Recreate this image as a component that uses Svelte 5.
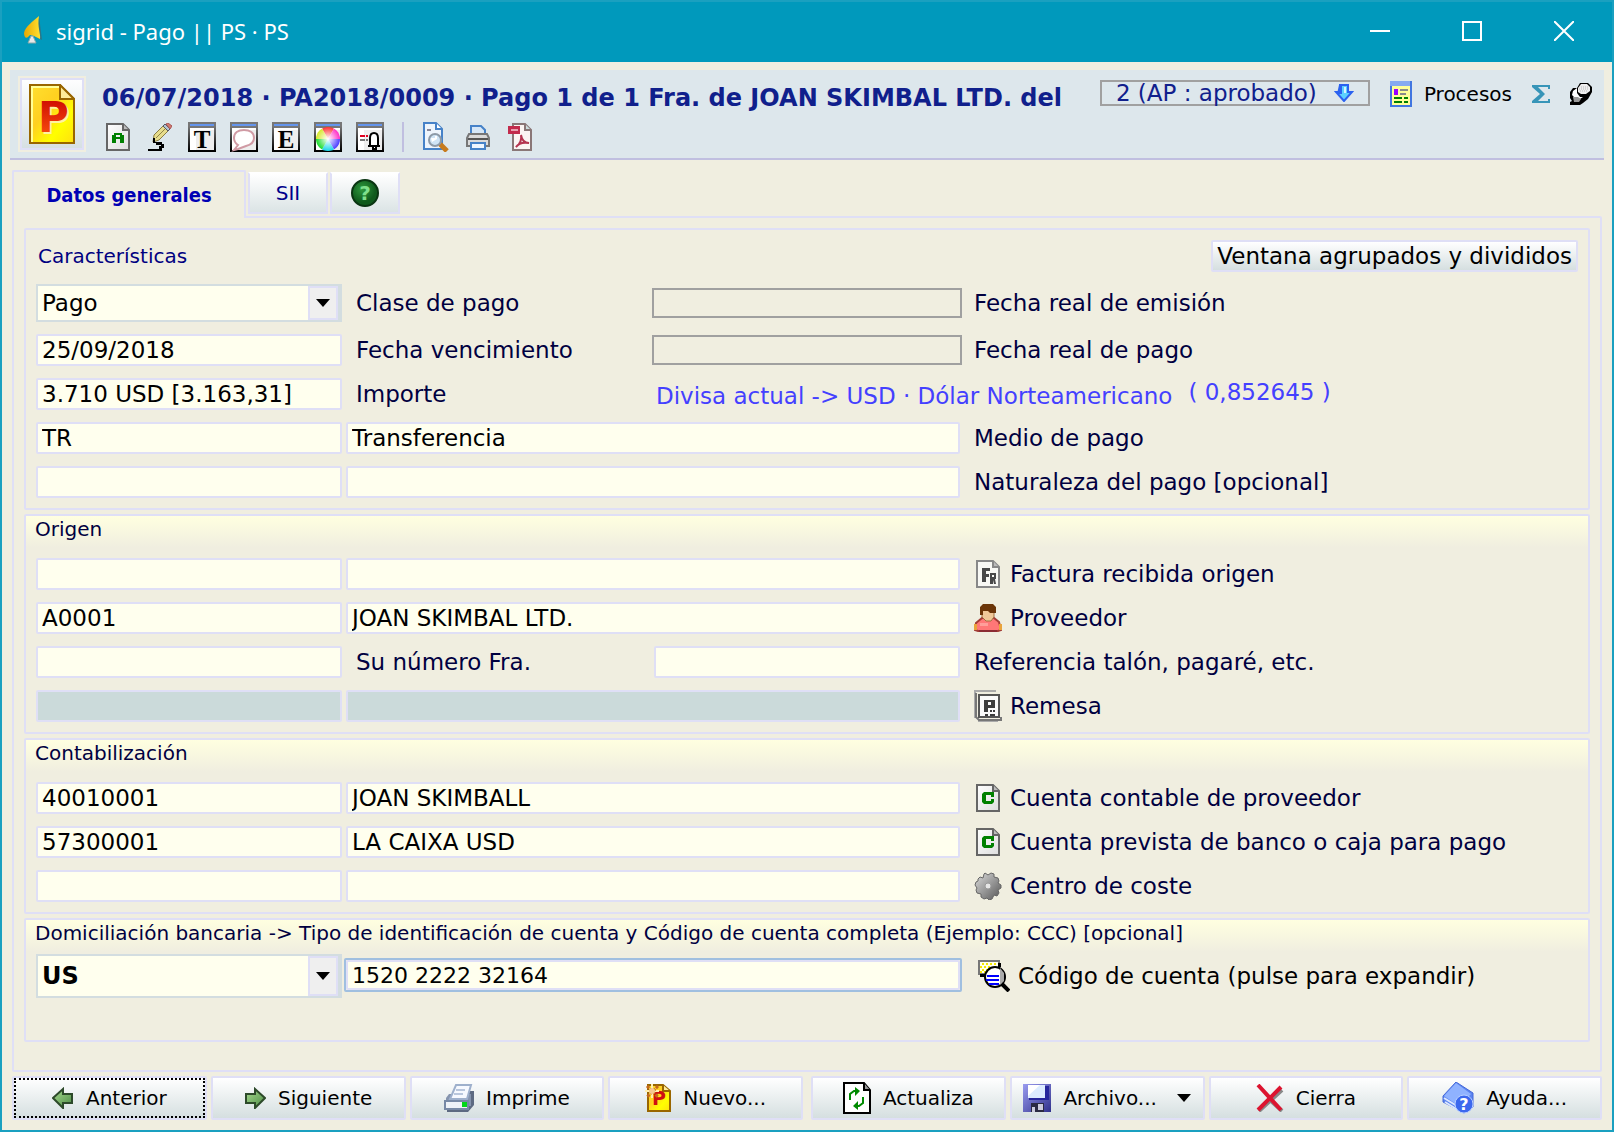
<script lang="ts">
  type Row = {
    id: string;
    code: string;
    name: string;
    label: string;
    icon?: string;
    readonly?: boolean;
  };

  const tools = ["doc-a", "pencil", "text", "bubble", "entry", "colors", "alarm"];
  const output = ["preview", "printer", "pdf"];

  const accounts: Row[] = [
    { id: "supplier-account", code: "40010001", name: "JOAN SKIMBALL", label: "Cuenta contable de proveedor", icon: "doc-c" },
    { id: "bank-account", code: "57300001", name: "LA CAIXA USD", label: "Cuenta prevista de banco o caja para pago", icon: "doc-c" },
    { id: "cost-center", code: "", name: "", label: "Centro de coste", icon: "gear" },
  ];

  const actions = [
    [
      { label: "Anterior", icon: "prev" },
      { label: "Siguiente", icon: "next" },
      { label: "Imprime", icon: "print" },
      { label: "Nuevo...", icon: "new" },
    ],
    [
      { label: "Actualiza", icon: "refresh" },
      { label: "Archivo...", icon: "disk", menu: true },
      { label: "Cierra", icon: "close" },
      { label: "Ayuda...", icon: "help" },
    ],
  ];

  let paymentClass = $state("Pago");
  let country = $state("US");
</script>

{#snippet frame()}
  <path fill="#fff" d="M1 1h26v28H1z" />
  <path fill="#eee" d="M8 8h19v20H8z" />
  <path fill="#777" d="M0 0h28v6H0z" />
  <path fill="#6495ed" d="M2 2h24v2H2z" />
  <path fill="none" stroke="url(#edge)" stroke-width="2" d="M1 4v25h26V4" />
{/snippet}

{#snippet page(stroke: string)}
  <path fill="url(#paper)" {stroke} stroke-width="2" d="M1 1h16l6 6v20H1z" />
  <path fill="#bbb" {stroke} stroke-width="2" d="M17 1v6h6" />
{/snippet}

{#snippet icon(name: string)}
  {#if name === "app"}
    <svg width="22" height="30" viewBox="0 0 22 30" aria-hidden="true">
      <path fill="#555" d="M17 0l3 24-6-3z" opacity=".5" />
      <path fill="url(#flame)" d="M17 0C11 5 3 11 2 17c0 4 2 6 4 4l2-2 4 1 6 3c1-5-3-12-1-23z" />
      <path fill="#e8e8e8" stroke="#8aa" d="M9 20l-3 7h8l-3-7z" />
    </svg>
  {:else if name === "payment"}
    <svg width="46" height="60" viewBox="0 0 46 60" aria-hidden="true">
      <path fill="url(#gold)" stroke="#960" stroke-width="2" d="M1 1h30l14 14v44H1z" />
      <path fill="none" stroke="#ff9" stroke-width="2" d="M3 58V3h27" />
      <path fill="#ffec9a" stroke="#960" stroke-width="2" d="M31 1v14h14z" />
      <text x="11" y="50" font-size="42" font-weight="bold" fill="#fff3a0">P</text>
      <text x="9" y="48" font-size="42" font-weight="bold" fill="url(#red)">P</text>
    </svg>
  {:else if name === "doc-a"}
    <svg width="24" height="28" viewBox="0 0 24 28" aria-hidden="true">
      {@render page("#666")}
      <path fill="#008000" d="M8 10h8v2h2v8h-4v-4h-4v4H6v-8h2zM10 12v2h4v-2z" />
    </svg>
  {:else if name === "pencil"}
    <svg width="24" height="28" viewBox="0 0 24 28" aria-hidden="true">
      <path fill="#e7dd8c" stroke="#8a7d42" d="M6 12L15 3l5 5-9 9-6 2z" />
      <path fill="none" stroke="#8f8446" d="M8 15L18 5" />
      <path fill="#b2c4d0" stroke="#556" d="M15 3l2-2 5 5-2 2z" />
      <path fill="#d27c70" stroke="#a55" d="M18 1l2-1 4 3-2 3z" />
      <path fill="#000" d="M5 15h2v4h7v2h2v4h-2v3H0v-2h11v-3h2v-1H8v-2H5z" />
    </svg>
  {:else if name === "text" || name === "entry"}
    <svg width="28" height="30" viewBox="0 0 28 30" aria-hidden="true">
      {@render frame()}
      <text class="serif" x="14" y="26" font-size="25" font-weight="bold" text-anchor="middle">{name === "text" ? "T" : "E"}</text>
    </svg>
  {:else if name === "bubble"}
    <svg width="28" height="30" viewBox="0 0 28 30" aria-hidden="true">
      {@render frame()}
      <path fill="#fff" stroke="#d09aa4" stroke-width="2" d="M14 8c6 0 10 3 10 8s-4 7-8 8l-8 3-4 1 4-5c-3-2-4-4-4-7 0-5 4-8 10-8z" />
    </svg>
  {:else if name === "colors"}
    <svg width="28" height="30" viewBox="0 0 28 30" aria-hidden="true">
      {@render frame()}
      <clipPath id="disc"><circle cx="14" cy="17" r="12" /></clipPath>
      <g clip-path="url(#disc)">
        <path fill="#f33" d="M14 17L6 3h16z" />
        <path fill="#ff2fc8" d="M14 17l8-14 8 14z" />
        <path fill="#4a3cff" d="M14 17h16l-8 14z" />
        <path fill="#18d7e8" d="M14 17l8 14H6z" />
        <path fill="#19dc2c" d="M14 17L6 31-2 17z" />
        <path fill="#d6e82a" d="M14 17H-2L6 3z" />
        <circle cx="14" cy="17" r="12" fill="url(#glow)" />
      </g>
    </svg>
  {:else if name === "alarm"}
    <svg width="28" height="30" viewBox="0 0 28 30" aria-hidden="true">
      {@render frame()}
      <path stroke="#e00020" stroke-width="2" stroke-dasharray="5 1" d="M4 14h8" />
      <path stroke="#777" stroke-width="2" stroke-dasharray="5 1" d="M4 18h8" />
      <path fill="#fff" stroke="#000" stroke-width="2" d="M12 24h2v-8c0-3 1-5 4-5s4 2 4 5v8h2zM17 24h3v3h-3z" />
    </svg>
  {:else if name === "preview"}
    <svg width="26" height="30" viewBox="0 0 26 30" aria-hidden="true">
      <path fill="#eef5fc" stroke="#4682c8" stroke-width="2" d="M1 1h12l6 6v20H1z" />
      <path fill="#fff" stroke="#4682c8" stroke-width="2" d="M13 1v6h6" />
      <path stroke="#889" stroke-width="2" d="M4 8h4" />
      <path stroke="#c77b1d" stroke-width="5" d="M17 22l7 7" />
      <circle cx="12" cy="18" r="6" fill="#cfe4f5" stroke="#8d9aa7" stroke-width="2" />
      <path fill="#fff" d="M8 16h4v-2h2v3l-5 3z" />
    </svg>
  {:else if name === "printer"}
    <svg width="24" height="28" viewBox="0 0 24 28" aria-hidden="true">
      <path fill="#d6e7f7" stroke="#4682c8" stroke-width="2" d="M5 12V3h10l4 4v5z" />
      <path fill="#dadada" stroke="#777" stroke-width="2" d="M3 11h18l2 4v8H1v-8z" />
      <path fill="#555" d="M2 15h20v2H2z" />
      <path fill="#fff" d="M18 19h2v2h-2z" />
      <path fill="#eef6ff" stroke="#4682c8" stroke-width="2" d="M5 20h14v6H5z" />
    </svg>
  {:else if name === "pdf"}
    <svg width="24" height="28" viewBox="0 0 24 28" aria-hidden="true">
      <path fill="#fbf5f3" stroke="#8a7777" stroke-width="2" d="M5 1h12l6 6v20H5z" />
      <path fill="#cdd" stroke="#8a7777" stroke-width="2" d="M17 1v6h6" />
      <path fill="#c22b4c" d="M0 3h12v8H0z" />
      <path stroke="#e8a0b0" stroke-width="2" d="M3 7h7" />
      <path fill="none" stroke="#b53550" stroke-width="2" d="M13 12c1 6 4 8 8 8-6-1-11 1-13 4 4-3 6-7 5-12z" />
    </svg>
  {:else if name === "down"}
    <svg width="20" height="18" viewBox="0 0 20 18" aria-hidden="true">
      <path fill="#5cd0ff" stroke="#2b62f0" stroke-width="2" d="M6 1h8v7h4l-8 9-8-9h4z" />
      <path fill="#2b62f0" d="M5 1h3v9H3z" />
      <path fill="#d5f4ff" d="M10 3h2v6h-2z" />
    </svg>
  {:else if name === "processes"}
    <svg width="22" height="26" viewBox="0 0 22 26" aria-hidden="true">
      <path fill="#ff9" stroke="#4176e0" stroke-width="2" d="M1 1h20v24H1z" />
      <path fill="#86aaf0" d="M0 0h20v5H0z" />
      <path fill="#90f" d="M4 8h4v6H4z" />
      <path fill="#8a8a8a" d="M10 8h8v2h-8zM10 12h6v2h-6z" />
      <path fill="#008000" d="M4 16h8v2H4zM14 16h4v2h-4zM4 20h8v2H4zM14 20h4v2h-4z" />
    </svg>
  {:else if name === "sum"}
    <svg width="18" height="18" viewBox="0 0 18 18" aria-hidden="true">
      <path fill="#3795b8" d="M0 0h18v4h-2V2H6l7 7-7 7h10v-2h2v4H0v-2l8-7-8-7z" />
    </svg>
  {:else if name === "pin"}
    <svg width="22" height="22" viewBox="0 0 22 22" aria-hidden="true">
      <path fill="#000" d="M10 0h8l4 4v5l-4 7-5 4-3 2H0v-3l2-1-2-3V9l3-4h4z" />
      <path fill="#fff" d="M3 8l4-3v5l3 4h3l-3 2-5-1-3-3z" />
      <path fill="#999" d="M3 14h5l3 2-2 3H4z" />
      <path fill="#eee" d="M11 1h6l3 3v4l-4 3h-5L8 9V5z" />
      <path stroke="#bbb" stroke-dasharray="1 1" d="M11 4h7M9 6h10M10 8h7" />
    </svg>
  {:else if name === "question"}
    <svg width="28" height="28" viewBox="0 0 28 28" aria-hidden="true">
      <circle cx="14" cy="14" r="13" fill="url(#green)" stroke="#0a3512" stroke-width="2" />
      <text x="14" y="21" font-size="20" font-weight="bold" text-anchor="middle" fill="#7fe08c">?</text>
    </svg>
  {:else if name === "invoice"}
    <svg width="28" height="28" viewBox="0 0 28 28" aria-hidden="true">
      <g transform="translate(2)">
        <path fill="#f8f8f4" stroke="#888" stroke-width="2" d="M1 1h16l6 6v20H1z" />
        <path fill="#bbb" stroke="#888" stroke-width="2" d="M17 1v6h6" />
        <path fill="#484848" d="M6 8h8v3h-4v3h3v3h-3v5H6z" />
        <path fill="#484848" fill-rule="evenodd" d="M14 13h6v6h-1l1 5h-2l-1-4v4h-3zM16 15v2h2v-2z" />
      </g>
    </svg>
  {:else if name === "person"}
    <svg width="28" height="28" viewBox="0 0 28 28" aria-hidden="true">
      <path fill="#f77" stroke="#a33d35" stroke-width="2" d="M8 14h12l5 4 2 8-3 1H4l-3-1 1-7z" />
      <path fill="#e9a33c" d="M0 20h3v6H0zM25 20h3v6h-3z" />
      <path fill="#ff9e9a" d="M6 19h8v3H6z" />
      <path fill="#f0c898" stroke="#a07040" d="M8 6h12v7l-3 4h-5l-4-4z" />
      <path fill="#6b3508" d="M6 11V3l3-3h10l3 3v6h-6l-2-2H9v4z" />
      <path fill="#8b2c34" d="M5 26h18v2H5z" />
    </svg>
  {:else if name === "batch"}
    <svg width="28" height="32" viewBox="0 0 28 32" aria-hidden="true">
      <path fill="none" stroke="#aaa" stroke-width="2" d="M1 28V1h21M4 31h20" />
      <path fill="none" stroke="#777" stroke-width="2" d="M2 3v24l3 3h22v-3" />
      <path fill="#fafafa" stroke="#555" stroke-width="2" d="M5 5h20v22H5z" />
      <path fill="#3c3c3c" fill-rule="evenodd" d="M10 10h11v8h-7v4h-4zM14 12v3h3v-3zM16 20h2v2h-2zM19 20h2v2h-2zM11 24h3v2h-3zM16 24h5v2h-5z" />
    </svg>
  {:else if name === "doc-c"}
    <svg width="28" height="28" viewBox="0 0 28 28" aria-hidden="true">
      <g transform="translate(2)">
        {@render page("#666")}
        <path fill="#008000" d="M8 8h10v5h-3v-2h-5v6h5v-2h3v3l-2 2H8l-2-2v-8z" />
      </g>
    </svg>
  {:else if name === "gear"}
    <svg width="28" height="28" viewBox="0 0 28 28" aria-hidden="true">
      <path
        fill="url(#steel)"
        stroke="#666"
        d="M11 1l3 2 3-2 3 1v3l4 1 1 3-1 2 3 2v3l-3 2 1 3-2 3-3-1-2 4-3 1-2-2-3 1-3-2v-3l-4-1-1-3 1-2-2-3 1-3 2-1V7l2-2 3 1 1-4z"
      />
      <circle cx="14" cy="14" r="3" fill="#e6e6e6" stroke="#999" />
    </svg>
  {:else if name === "search"}
    <svg width="32" height="32" viewBox="0 0 32 32" aria-hidden="true">
      <path fill="#fffff0" stroke="#777" stroke-width="2" d="M1 1h20v13H1z" />
      <path stroke="#f5e800" stroke-width="2" stroke-dasharray="2 2" d="M4 4h15M2 7h12M4 10h7M2 12h6" />
      <path fill="#000" d="M2 14h7v6H7v-3H2zM20 3h3v4h-3z" />
      <circle cx="17" cy="17" r="10" fill="#fff" stroke="#000" stroke-width="2" />
      <path fill="#aaa" d="M22 8l4 5v8l-4 4z" />
      <path stroke="#00f" stroke-width="2" d="M9 16h12M8 20h13M11 24h10" />
      <path stroke="#000" stroke-width="4" d="M24 24l7 7" />
    </svg>
  {:else if name === "prev" || name === "next"}
    <svg width="22" height="22" viewBox="0 0 22 22" aria-hidden="true">
      <path
        fill="url(#leaf)"
        stroke="#2d4a2a"
        stroke-width="2"
        d={name === "prev" ? "M1 11L11 2v5h9v9h-9v5z" : "M21 11L11 2v5H2v9h9v5z"}
      />
    </svg>
  {:else if name === "print"}
    <svg width="30" height="28" viewBox="0 0 30 28" aria-hidden="true">
      <path fill="#5d6a82" d="M24 7h6v14l-6 7H3v-4h21z" />
      <path fill="#8594ae" d="M5 10h22v12H2v-8z" />
      <path fill="#f6f9ff" stroke="#9eb0cc" stroke-width="2" d="M12 1h15l-4 14H6z" />
      <path stroke="#b9c7dd" stroke-width="2" d="M12 6h9M10 10h9" />
      <path fill="#eef2f8" stroke="#7789a6" stroke-width="2" d="M1 17h23v8H1z" />
      <path fill="#00d818" d="M18 18h5v5h-5z" />
    </svg>
  {:else if name === "new"}
    <svg width="26" height="28" viewBox="0 0 26 28" aria-hidden="true">
      <path fill="url(#gold)" stroke="#960" stroke-width="2" d="M3 1h15l7 6v20H3z" />
      <path fill="#ffec9a" stroke="#960" stroke-width="2" d="M18 1v6h7" />
      <text x="7" y="21" font-size="19" font-weight="bold" fill="#d01010">P</text>
      <path stroke="#fff0b0" stroke-width="2" d="M7 0v14M0 7h14" />
      <path stroke="#c46a1c" stroke-width="3" stroke-dasharray="3 1" d="M2 2l11 11M13 2L2 13" />
      <circle cx="7" cy="7" r="3" fill="#f6c890" />
    </svg>
  {:else if name === "refresh"}
    <svg width="28" height="32" viewBox="0 0 28 32" aria-hidden="true">
      <path fill="#fff" stroke="#000" stroke-width="2" d="M1 1h20l6 7v23H1z" />
      <path fill="#999" stroke="#000" stroke-width="2" d="M21 1v7h6" />
      <path fill="none" stroke="#008a00" stroke-width="2" d="M7 18v-6l4-3h2M20 15v6l-4 3h-3" />
      <path fill="#008a00" d="M12 5l5 4-5 5zM15 19l-5 5 5 4z" />
    </svg>
  {:else if name === "disk"}
    <svg width="28" height="28" viewBox="0 0 28 28" aria-hidden="true">
      <path fill="url(#disk)" d="M0 0h28v28H0z" />
      <path fill="#26279c" d="M22 2h4v14H6v-2h16z" />
      <path fill="#dcecff" d="M5 1h17v13H5z" />
      <path fill="#fff" d="M5 1h12L5 12z" />
      <path fill="#2a2a42" d="M8 19h13v9H8z" />
      <path fill="#ccd" d="M15 20h5v6h-5zM9 23h3v5H9z" />
    </svg>
  {:else if name === "close"}
    <svg width="28" height="28" viewBox="0 0 28 28" aria-hidden="true">
      <path stroke="#888" stroke-width="4" d="M3 27L26 6M14 16l12 11" />
      <path stroke="#dc1430" stroke-width="4" d="M2 1l23 25M25 3L2 26" />
    </svg>
  {:else if name === "help"}
    <svg width="32" height="32" viewBox="0 0 32 32" aria-hidden="true">
      <path fill="#5b84f0" stroke="#4468d8" d="M14 0l17 11v14l-9 6L1 20v-6z" />
      <path fill="#8fb2ff" d="M14 1l15 11-12 12L2 14z" />
      <path fill="none" stroke="#dbe7ff" stroke-width="2" d="M3 20l13 8M2 16l13 8" />
      <circle cx="22" cy="22" r="9" fill="#3c68ee" stroke="#b9d0ff" />
      <text x="22" y="28" font-size="16" font-weight="bold" text-anchor="middle" fill="#fff">?</text>
    </svg>
  {/if}
{/snippet}

{#snippet fieldRow(row: Row)}
  <input class="field" class:readonly={row.readonly} id={row.id} value={row.code} readonly={row.readonly} />
  <input
    class="field wide"
    class:readonly={row.readonly}
    value={row.name}
    readonly={row.readonly}
    aria-label={row.label}
  />
  <label class="caption" for={row.id}>
    {#if row.icon}{@render icon(row.icon)}{/if}
    {row.label}
  </label>
{/snippet}

<svg class="defs" width="0" height="0" aria-hidden="true">
  <defs>
    <linearGradient id="edge" x2="0" y2="1"><stop stop-color="#777" /><stop offset="1" /></linearGradient>
    <linearGradient id="paper" x2="1" y2="1"><stop stop-color="#fff" /><stop offset="1" stop-color="#ddd" /></linearGradient>
    <linearGradient id="flame" x2="1"><stop stop-color="#e8a800" /><stop offset="1" stop-color="#ffe030" /></linearGradient>
    <linearGradient id="gold" x2="1" y2="1"><stop stop-color="#ffe030" /><stop offset=".4" stop-color="#ffd020" /><stop offset=".7" stop-color="#ff0" /><stop offset="1" stop-color="#ffe010" /></linearGradient>
    <linearGradient id="red" x2="0" y2="1"><stop stop-color="#c80000" /><stop offset="1" stop-color="#ff5a10" /></linearGradient>
    <linearGradient id="leaf" x2="1" y2="1"><stop stop-color="#a8dc90" /><stop offset="1" stop-color="#4c8a44" /></linearGradient>
    <linearGradient id="disk" x2="1" y2="1"><stop stop-color="#9a9cf0" /><stop offset="1" stop-color="#30318c" /></linearGradient>
    <linearGradient id="steel" x2="1" y2="1"><stop stop-color="#ddd" /><stop offset="1" stop-color="#555" /></linearGradient>
    <radialGradient id="glow"><stop stop-color="#fff" /><stop offset="1" stop-color="#fff" stop-opacity="0" /></radialGradient>
    <radialGradient id="green" cx=".4" cy=".35"><stop stop-color="#2f9a3e" /><stop offset="1" stop-color="#0f5a1c" /></radialGradient>
  </defs>
</svg>

<div class="window">
  <header class="titlebar">
    {@render icon("app")}
    <span class="caption-text">sigrid - Pago || PS · PS</span>
    <button aria-label="Minimizar">
      <svg width="20" height="20"><path stroke="#fff" stroke-width="2" d="M0 10h20" /></svg>
    </button>
    <button aria-label="Maximizar">
      <svg width="20" height="20"><path fill="none" stroke="#fff" stroke-width="2" d="M1 1h18v18H1z" /></svg>
    </button>
    <button aria-label="Cerrar">
      <svg width="20" height="20"><path stroke="#fff" stroke-width="2" d="M0 0l20 20M20 0L0 20" /></svg>
    </button>
  </header>

  <div class="banner">
    <button class="document" aria-label="Pago">{@render icon("payment")}</button>
    <div class="summary">
      <div class="headline">
        <h1>06/07/2018 · PA2018/0009 · Pago 1 de 1 Fra. de JOAN SKIMBAL LTD. del</h1>
        <button class="status">2 (AP : aprobado) {@render icon("down")}</button>
        <button class="plain processes">{@render icon("processes")} Procesos</button>
        <button class="plain" aria-label="Sumatorio">{@render icon("sum")}</button>
        <button class="plain" aria-label="Fijar">{@render icon("pin")}</button>
      </div>
      <div class="toolbar">
        {#each tools as tool (tool)}
          <button class="plain" aria-label={tool}>{@render icon(tool)}</button>
        {/each}
        <span class="separator"></span>
        {#each output as tool (tool)}
          <button class="plain" aria-label={tool}>{@render icon(tool)}</button>
        {/each}
      </div>
    </div>
  </div>

  <nav class="tabs">
    <button class="tab active">Datos generales</button>
    <button class="tab">SII</button>
    <button class="tab" aria-label="Ayuda">{@render icon("question")}</button>
  </nav>

  <main class="panel">
    <section class="group">
      <div class="heading">
        <h2>Características</h2>
        <button class="raised">Ventana agrupados y divididos</button>
      </div>
      <div class="combo">
        <select id="payment-class" bind:value={paymentClass}>
          <option>Pago</option>
          <option>Cobro</option>
        </select>
        <span class="arrow"></span>
      </div>
      <label class="caption" for="payment-class">Clase de pago</label>
      <input class="outlined" id="issue-date" readonly />
      <label class="caption" for="issue-date">Fecha real de emisión</label>

      <input class="field" id="due-date" value="25/09/2018" />
      <label class="caption" for="due-date">Fecha vencimiento</label>
      <input class="outlined" id="payment-date" readonly />
      <label class="caption" for="payment-date">Fecha real de pago</label>

      <input class="field" id="amount" value="3.710 USD [3.163,31]" />
      <label class="caption" for="amount">Importe</label>
      <div class="currency">
        <span>Divisa actual -&gt; USD · Dólar Norteamericano</span>
        <span class="rate">( 0,852645 )</span>
      </div>

      {@render fieldRow({ id: "method", code: "TR", name: "Transferencia", label: "Medio de pago" })}
      {@render fieldRow({ id: "nature", code: "", name: "", label: "Naturaleza del pago [opcional]" })}
    </section>

    <section class="group shaded">
      <h2>Origen</h2>
      {@render fieldRow({ id: "invoice", code: "", name: "", label: "Factura recibida origen", icon: "invoice" })}
      {@render fieldRow({ id: "supplier", code: "A0001", name: "JOAN SKIMBAL LTD.", label: "Proveedor", icon: "person" })}
      <input class="field" id="invoice-number" />
      <label class="caption" for="invoice-number">Su número Fra.</label>
      <input class="field" id="reference" />
      <label class="caption" for="reference">Referencia talón, pagaré, etc.</label>
      {@render fieldRow({ id: "batch", code: "", name: "", label: "Remesa", icon: "batch", readonly: true })}
    </section>

    <section class="group shaded">
      <h2>Contabilización</h2>
      {#each accounts as row (row.id)}
        {@render fieldRow(row)}
      {/each}
    </section>

    <section class="group shaded bank">
      <h2>
        Domiciliación bancaria -&gt; Tipo de identificación de cuenta y Código de cuenta completa (Ejemplo: CCC) [opcional]
      </h2>
      <div class="combo tall">
        <select aria-label="Tipo de identificación de cuenta" bind:value={country}>
          <option>US</option>
          <option>ES</option>
        </select>
        <span class="arrow"></span>
      </div>
      <div class="focus-ring">
        <input class="field" id="account-code" value="1520 2222 32164" />
      </div>
      <label class="caption dark" for="account-code">{@render icon("search")} Código de cuenta (pulse para expandir)</label>
    </section>
  </main>

  <footer class="actions">
    {#each actions as group, i (i)}
      <div class="action-group">
        {#each group as action (action.label)}
          <button class="action" class:focused={action.label === "Anterior"}>
            {@render icon(action.icon)}
            {action.label}
            {#if action.menu}<span class="caret"></span>{/if}
          </button>
        {/each}
      </div>
    {/each}
  </footer>
</div>

<style>
  :global(body) {
    background: #f0eee0;
  }

  .window {
    box-sizing: border-box;
    min-height: 100vh;
    padding-bottom: 10px;
    border: 2px solid #1aa0c0;
    background: #f0eee0;
    color: #000040;
    font-family: Verdana, "DejaVu Sans", sans-serif;
    font-size: 23px;
    line-height: 28px;
    display: flex;
    flex-direction: column;
  }

  .defs {
    position: absolute;
  }

  svg {
    flex: none;
    display: block;
  }

  .serif {
    font-family: "Liberation Serif", serif;
  }

  button,
  input,
  select {
    box-sizing: border-box;
    margin: 0;
    min-width: 0;
    font: inherit;
    color: #000;
  }

  h1,
  h2 {
    margin: 0;
  }

  .titlebar {
    box-sizing: border-box;
    display: flex;
    align-items: center;
    height: 60px;
    padding: 0 2px 2px 20px;
    background: #0099bc;
    color: #fff;
    font-family: "Segoe UI", "Noto Sans", sans-serif;
    font-size: 22px;
  }

  .caption-text {
    flex: 1;
    margin-left: 12px;
  }

  .titlebar button {
    display: flex;
    justify-content: center;
    width: 92px;
    padding: 0;
    border: 0;
    background: none;
  }

  .banner {
    display: flex;
    gap: 16px;
    margin: 8px 8px 0;
    padding: 6px 12px 6px 8px;
    border-bottom: 2px solid #c0bfe0;
    background: #dde7ec;
  }

  .document {
    display: flex;
    align-items: center;
    justify-content: center;
    width: 68px;
    height: 76px;
    padding: 0;
    border: 2px solid #f0eee0;
    box-shadow: inset 0 0 0 2px #dfdff6;
    background: linear-gradient(#fff, #d5dfe2);
  }

  .summary {
    flex: 1;
    min-width: 0;
    display: flex;
    flex-direction: column;
    justify-content: space-between;
  }

  .headline {
    display: flex;
    align-items: flex-start;
    gap: 20px;
  }

  h1 {
    flex: 1;
    min-width: 0;
    padding-top: 8px;
    overflow: hidden;
    white-space: nowrap;
    color: #10208c;
    font-size: 24px;
    line-height: 28px;
  }

  .plain {
    display: flex;
    align-items: center;
    justify-content: center;
    padding: 0;
    border: 0;
    background: none;
  }

  .headline .plain {
    height: 36px;
  }

  .processes {
    gap: 12px;
    font-size: 20px;
  }

  .status {
    display: flex;
    align-items: center;
    justify-content: space-between;
    width: 270px;
    height: 26px;
    margin-top: 4px;
    padding: 0 14px;
    border: 2px solid #a0a0a0;
    background: none;
    color: #10208c;
    line-height: 22px;
    white-space: nowrap;
  }

  .toolbar {
    display: flex;
    align-items: center;
    gap: 14px;
    height: 30px;
    padding-left: 2px;
  }

  .toolbar .plain {
    min-width: 28px;
  }

  .separator {
    width: 2px;
    height: 30px;
    margin: 0 4px;
    background: #c0bfe0;
  }

  .tabs {
    display: flex;
    align-items: flex-end;
    margin: 10px 10px 0;
  }

  .tab {
    display: flex;
    align-items: center;
    justify-content: center;
    width: 80px;
    height: 42px;
    margin: 0 0 2px 2px;
    padding: 0;
    border: 2px solid #dfdff6;
    border-top-color: #fff;
    background: linear-gradient(#fff, #dbe4e5);
    color: #00008b;
    font-size: 20px;
  }

  .tab:nth-child(3) {
    width: 70px;
  }

  /* overlaps the panel's top border so the two read as one surface */
  .tab.active {
    z-index: 1;
    width: 234px;
    height: 48px;
    margin: 0 0 -2px;
    border-color: #dfdff6;
    border-bottom: 0;
    border-radius: 2px 2px 0 0;
    background: #f0eee0;
    color: #0000b4;
    font-family: Tahoma, "DejaVu Sans Condensed", "DejaVu Sans", sans-serif;
    font-weight: bold;
  }

  .panel {
    flex: 1;
    display: flex;
    flex-direction: column;
    gap: 4px;
    margin: 0 10px;
    padding: 10px 10px 28px;
    border: 2px solid #dfdff6;
    border-radius: 2px;
  }

  .group {
    display: grid;
    grid-template-columns: 306fr 304fr 306fr 614fr;
    gap: 12px 4px;
    align-items: center;
    padding: 10px;
    border: 2px solid #dfdff6;
    border-radius: 2px;
  }

  .shaded {
    padding-top: 0;
    background: linear-gradient(#ffffe0, #f0eee0) top / 100% 32px no-repeat;
  }

  .heading {
    grid-column: 1 / -1;
    display: flex;
    align-items: center;
    justify-content: space-between;
  }

  h2 {
    grid-column: 1 / -1;
    margin-left: -1px;
    padding-bottom: 4px;
    font-size: 20px;
    font-weight: normal;
    line-height: 26px;
  }

  .heading h2 {
    margin-left: 2px;
    padding: 0;
    color: #000080;
  }

  .raised {
    height: 32px;
    padding: 0 4px;
    border: 2px solid #dfdff6;
    border-radius: 2px;
    background: linear-gradient(#fff, #d5dfe0);
  }

  .field {
    width: 100%;
    height: 32px;
    padding: 0 4px;
    border: 2px solid #dfdff6;
    border-radius: 2px;
    background: #ffffee;
    outline: 0;
  }

  .wide {
    grid-column: span 2;
  }

  .readonly {
    background: #cbdada;
  }

  .outlined {
    height: 30px;
    margin: 0 -2px;
    border: 2px solid #a0a0a0;
    background: none;
  }

  .caption {
    display: flex;
    align-items: center;
    gap: 8px;
    height: 32px;
    padding-left: 10px;
    white-space: nowrap;
  }

  .caption.dark {
    padding-left: 14px;
    color: #000;
  }

  .combo {
    display: flex;
    height: 38px;
    box-sizing: border-box;
    border: 2px solid #d3dde0;
    border-right-width: 4px;
    background: #ffffee;
  }

  .combo.tall {
    height: 44px;
    font-size: 24px;
    font-weight: bold;
  }

  select {
    flex: 1;
    padding: 0 4px;
    border: 0;
    appearance: none;
    background: none;
  }

  .arrow {
    display: flex;
    align-items: center;
    justify-content: center;
    width: 30px;
    box-sizing: border-box;
    border: 2px solid #dfdff6;
    background: #efefef;
    pointer-events: none;
  }

  .arrow::after,
  .caret {
    content: "";
    border: 7px solid transparent;
    border-top: 8px solid #000;
    border-bottom: 0;
  }

  .caret {
    margin-left: 8px;
  }

  .currency {
    grid-column: 3 / -1;
    display: flex;
    gap: 16px;
    height: 32px;
    padding-left: 2px;
    align-items: flex-end;
    color: #4440ff;
    white-space: nowrap;
  }

  .rate {
    align-self: flex-start;
  }

  .bank {
    row-gap: 4px;
    padding-bottom: 42px;
  }

  .bank h2 {
    white-space: nowrap;
  }

  .focus-ring {
    grid-column: span 2;
    align-self: start;
    margin: 4px -2px 0;
    border: 2px solid #a0bfe0;
    border-radius: 2px;
  }

  .focus-ring .field {
    display: block;
    height: 30px;
    font-size: 22px;
  }

  .actions {
    display: flex;
    gap: 8px;
    margin: 4px 10px 0;
  }

  .action-group {
    flex: 1;
    display: grid;
    grid-template-columns: repeat(4, 1fr);
    gap: 4px;
  }

  .action {
    display: flex;
    align-items: center;
    justify-content: center;
    gap: 12px;
    height: 44px;
    padding: 0 4px;
    border: 2px solid #dfdff6;
    border-radius: 2px;
    background: linear-gradient(#fff, #d5dfe0);
    font-size: 20px;
    white-space: nowrap;
  }

  .action.focused {
    outline: 2px dotted #000;
    outline-offset: -4px;
  }
</style>
